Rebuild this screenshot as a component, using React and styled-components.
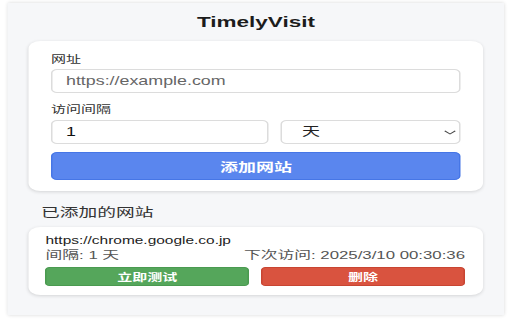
import React from "react";
import styled, { createGlobalStyle } from "styled-components";

const GlobalStyle = createGlobalStyle`
  html, body {
    margin: 0;
    padding: 0;
    background: #ffffff;
    overflow: hidden;
  }
  body {
    font-family: "Liberation Sans", "Noto Sans CJK SC", sans-serif;
  }
  * { box-sizing: border-box; }
`;

/* The reference is a popup screenshot stretched 1.5x horizontally. */
const Stage = styled.div`
  width: 341.33px;
  height: 320px;
  padding: 3px 5.33px 0;
  transform: scaleX(1.5);
  transform-origin: 0 0;
`;

const Panel = styled.main`
  height: 312px;
  background: #f6f7f9;
  box-shadow: 0 0 3px rgba(0, 0, 0, 0.16);
  padding: 9px 14px 20px;
`;

const Title = styled.h1`
  margin: 0 0 9px;
  font-size: 15px;
  line-height: 20px;
  font-weight: 700;
  text-align: center;
  color: #1c1c1c;
`;

const Card = styled.section`
  background: #ffffff;
  border-radius: 8px;
  box-shadow: 0 1px 3px rgba(0, 0, 0, 0.14);
  padding: ${(p) => p.$pad};
`;

const Field = styled.div`
  margin-top: ${(p) => (p.$first ? "0" : "10px")};
`;

const Label = styled.label`
  display: block;
  font-size: 10px;
  line-height: 14px;
  color: #333333;
  margin-bottom: ${(p) => p.$gap || "2px"};
`;

const TextInput = styled.input`
  display: block;
  width: 100%;
  height: 24px;
  border: 1px solid #dcdcdc;
  border-radius: 4px;
  padding: 0 9px;
  font-family: inherit;
  font-size: 11.9px;
  color: #111111;
  background: #ffffff;
  outline: none;
  &::placeholder {
    color: #666666;
  }
`;

const Row = styled.div`
  display: grid;
  grid-template-columns: 1fr 120px;
  gap: 8px;
`;

const SelectBox = styled.div`
  display: flex;
  align-items: center;
  height: 24px;
  border: 1px solid #dcdcdc;
  border-radius: 4px;
  padding: 0 2px 0 13px;
  background: #ffffff;
`;

const Select = styled.select`
  flex: 1;
  appearance: none;
  border: none;
  background: transparent;
  font-family: inherit;
  font-size: 12px;
  color: #222222;
  padding: 0;
  outline: none;
`;

const PrimaryButton = styled.button`
  display: block;
  width: 100%;
  height: 28px;
  margin-top: 8px;
  background: #5a86ee;
  border: 1px solid #4676e6;
  border-radius: 4px;
  color: #ffffff;
  font-family: inherit;
  font-size: 12px;
  font-weight: 700;
`;

const SectionTitle = styled.h2`
  margin: 14px 0 6px 8px;
  font-size: 12.5px;
  line-height: 16px;
  font-weight: 400;
  color: #333333;
`;

const Line = styled.div`
  display: flex;
  justify-content: space-between;
  font-size: ${(p) => p.$size};
  line-height: 15px;
  color: ${(p) => p.$color};
`;

const Actions = styled.div`
  display: grid;
  grid-template-columns: 1fr 1fr;
  gap: 8px;
  margin-top: 4px;
`;

const SmallButton = styled.button`
  height: 19px;
  border-radius: 3px;
  background: ${(p) => p.$bg};
  border: 1px solid ${(p) => p.$edge};
  color: #ffffff;
  font-family: inherit;
  font-size: 10px;
  font-weight: 700;
  padding: 0;
`;

const Chevron = () => (
  <svg width="8" height="5" viewBox="0 0 8 5" fill="none">
    <path d="M0.5 0.8 L4 4 L7.5 0.8" stroke="#444" strokeWidth="0.9" />
  </svg>
);

export default function App() {
  return (
    <>
      <GlobalStyle />
      <Stage>
        <Panel>
          <Title>TimelyVisit</Title>
          <Card $pad="12px 14.67px 11px">
            <Field $first>
              <Label>网址</Label>
              <TextInput placeholder="https://example.com" />
            </Field>
            <Field>
              <Label $gap="3px">访问间隔</Label>
              <Row>
                <TextInput type="number" defaultValue="1" />
                <SelectBox>
                  <Select defaultValue="day">
                    <option value="day">天</option>
                    <option value="hour">小时</option>
                  </Select>
                  <Chevron />
                </SelectBox>
              </Row>
            </Field>
            <PrimaryButton>添加网站</PrimaryButton>
          </Card>
          <SectionTitle>已添加的网站</SectionTitle>
          <Card $pad="6px 12px 9px 11px">
            <Line $color="#222222" $size="10.3px">https://chrome.google.co.jp</Line>
            <Line $color="#555555" $size="11.2px">
              <span>间隔: 1 天</span>
              <span>下次访问: 2025/3/10 00:30:36</span>
            </Line>
            <Actions>
              <SmallButton $bg="#55a65b" $edge="#4a9a50">立即测试</SmallButton>
              <SmallButton $bg="#d9533f" $edge="#c84532">删除</SmallButton>
            </Actions>
          </Card>
        </Panel>
      </Stage>
    </>
  );
}
